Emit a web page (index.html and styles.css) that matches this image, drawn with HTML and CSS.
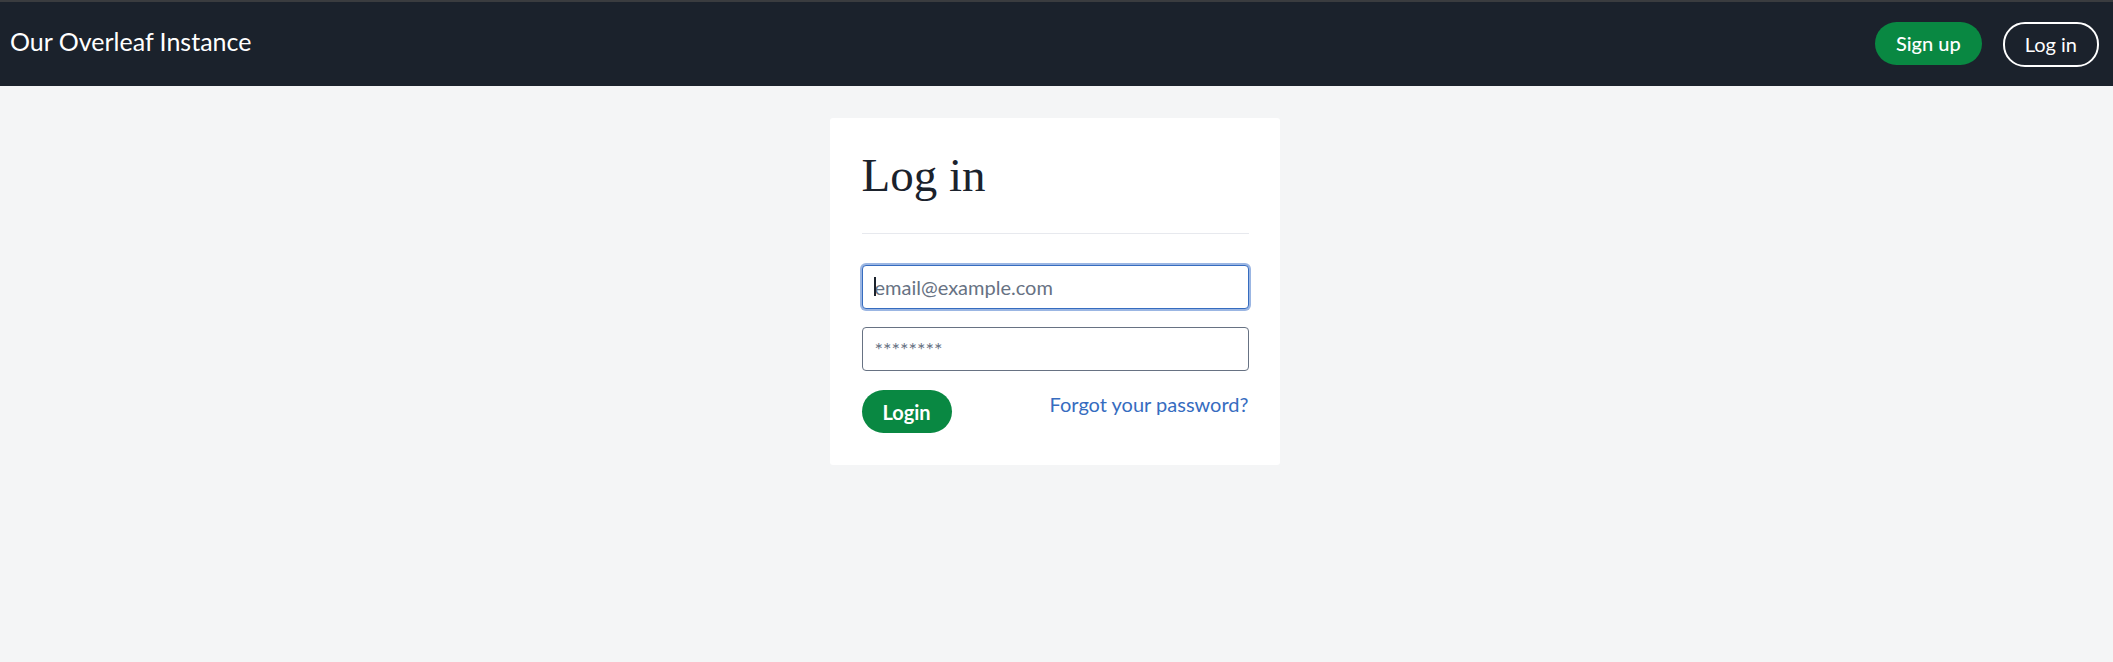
FILE: index.html
```html
<!DOCTYPE html>
<html lang="en">
<head>
    <meta charset="UTF-8">
    <meta name="viewport" content="width=device-width, initial-scale=1.0">
    <title>Log in - Our Overleaf Instance</title>
    <link rel="stylesheet" href="styles.css">
</head>
<body>
    <nav class="navbar">
        <a class="brand" href="#">Our Overleaf Instance</a>
        <div class="nav-actions">
            <a class="btn btn-primary btn-signup" href="#">Sign up</a>
            <a class="btn btn-outline" href="#">Log in</a>
        </div>
    </nav>

    <main class="content">
        <div class="login-card">
            <h1>Log in</h1>
            <hr>
            <form class="login-form">
                <div class="input-wrap">
                    <input type="email" class="form-control focused" placeholder="email@example.com">
                    <span class="caret"></span>
                </div>
                <input type="password" class="form-control" placeholder="********">
                <div class="actions">
                    <button type="submit" class="btn btn-primary btn-login">Login</button>
                    <a class="forgot" href="#">Forgot your password?</a>
                </div>
            </form>
        </div>
    </main>
</body>
</html>
```

FILE: styles.css
```css
body {
    margin: 0;
    font-family: Lato, "Open Sans", sans-serif;
    background-color: #f4f5f6;
    border-top: 2px solid #3a3c3f;
    min-height: 100vh;
    box-sizing: border-box;
}

.navbar {
    display: flex;
    align-items: center;
    justify-content: space-between;
    height: 84px;
    padding: 0 14px 0 10px;
    background-color: #1b222c;
}

.brand {
    margin-bottom: 7px;
    color: #ffffff;
    font-size: 25px;
    text-decoration: none;
}

.nav-actions {
    display: flex;
    gap: 21px;
}

.btn {
    display: inline-flex;
    align-items: center;
    justify-content: center;
    height: 43px;
    padding: 0 20px;
    border-radius: 22px;
    font-family: Lato, sans-serif;
    font-size: 20px;
    font-weight: 500;
    text-decoration: none;
    box-sizing: border-box;
    border: none;
    cursor: pointer;
}

.btn-primary {
    background-color: #098842;
    color: #ffffff;
}

.btn-signup {
    padding: 0 21px;
}

.btn-outline {
    border: 2px solid #ffffff;
    color: #ffffff;
    font-weight: 400;
    height: 45px;
    padding: 0 20px;
}

.content {
    display: flex;
    justify-content: center;
    padding: 32px 4px 0 0;
}

.login-card {
    width: 450px;
    box-sizing: border-box;
    padding: 29px 31px 32px 32px;
    background: #ffffff;
    border-radius: 3px;
}

h1 {
    margin: 0;
    font-family: "Liberation Serif", serif;
    font-weight: 400;
    font-size: 47px;
    line-height: 1.2;
    color: #1b222c;
}

hr {
    border: none;
    border-top: 1px solid #e7e9ee;
    margin: 30px 0 31px;
}

.login-form {
    display: flex;
    flex-direction: column;
    gap: 18px;
}

.input-wrap {
    position: relative;
    display: flex;
    flex-direction: column;
}

.caret {
    position: absolute;
    left: 12px;
    top: 12px;
    width: 2px;
    height: 19px;
    background-color: #1b222c;
}

.form-control {
    height: 44px;
    padding: 0 12px;
    border: 1px solid #677283;
    border-radius: 4px;
    font-family: Lato, sans-serif;
    font-size: 20px;
    color: #1b222c;
    box-sizing: border-box;
}

.form-control::placeholder {
    color: #677283;
}

.focused {
    border-color: #366cbf;
    box-shadow: 0 0 0 2px #9bb6e3;
    outline: none;
}

.actions {
    display: flex;
    justify-content: space-between;
    align-items: flex-start;
    margin-top: 1px;
}

.btn-login {
    width: 90px;
    padding: 0;
    font-weight: 700;
}

.forgot {
    margin-top: 2px;
    color: #366cbf;
    font-size: 20px;
    text-decoration: none;
}
```
